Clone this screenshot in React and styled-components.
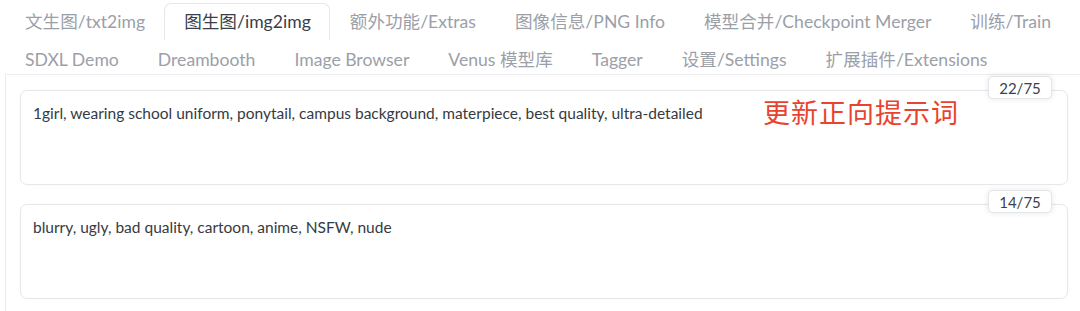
import React from 'react'
import styled, { createGlobalStyle } from 'styled-components'

const GlobalStyle = createGlobalStyle`
  body{
    margin:0;
    background:#fff;
    font-family:Lato, "Noto Sans CJK SC", sans-serif;
  }
`;

const Page = styled.div`
  width:1080px;
  height:311px;
  overflow:hidden;
  background:#fff;
`;

const TabNav = styled.div`
  display:flex;
  flex-direction:column;
  padding:3px 0 0 5px;
`;

const TabRow = styled.div`
  display:flex;
  white-space:nowrap;
`;

const Tab = styled.button`
  box-sizing:border-box;
  flex:none;
  height:${props=>props.row2?'34px':'37px'};
  padding:${props=>props.row2?'4px 18px 0 19px':'0 18px 0 19px'};
  margin:0;
  background:#fff;
  border:1px solid ${props=>props.active?'#e6e7ea':'transparent'};
  border-bottom:none;
  border-radius:7px 7px 0 0;
  font-family:Lato, "Noto Sans CJK SC", sans-serif;
  font-size:17.6px;
  color:${props=>props.active?'#3a3f4a':'#9ba0a8'};
  white-space:nowrap;
  line-height:1;
`;

const Panel = styled.div`
  margin-left:5px;
  border:1px solid #ececee;
  border-right:none;
  border-bottom:none;
  padding:15px 12px 0 14px;
  display:flex;
  flex-direction:column;
  gap:19px;
  height:240px;
  box-sizing:border-box;
`;

const PromptBox = styled.div`
  position:relative;
  box-sizing:border-box;
  height:95px;
  border:1px solid #e6e7ea;
  border-radius:7px;
  padding:13px 12px;
  font-size:15.5px;
  color:#363a42;
  box-shadow:0 0 2px rgba(0,0,0,0.03);
`;

const Counter = styled.span`
  position:absolute;
  top:-15px;
  right:15px;
  width:64px;
  height:23px;
  box-sizing:border-box;
  display:flex;
  align-items:center;
  justify-content:center;
  background:#fff;
  border:1px solid #e4e5e8;
  border-radius:5px;
  box-shadow:0 0 4px 2px rgba(0,0,0,0.05);
  font-size:15px;
  color:#3c414b;
`;

const Note = styled.span`
  position:absolute;
  top:1px;
  left:742px;
  font-family:"Noto Sans CJK SC", sans-serif;
  font-size:27px;
  color:#e8432e;
  letter-spacing:1px;
`;

const row1 = ['文生图/txt2img','图生图/img2img','额外功能/Extras','图像信息/PNG Info','模型合并/Checkpoint Merger','训练/Train'];
const row2 = ['SDXL Demo','Dreambooth','Image Browser','Venus 模型库','Tagger','设置/Settings','扩展插件/Extensions'];

const App = () => {
  return (
    <Page>
      <GlobalStyle/>
      <TabNav>
        <TabRow>
          {row1.map(t=><Tab key={t} active={t==='图生图/img2img'}>{t}</Tab>)}
        </TabRow>
        <TabRow>
          {row2.map(t=><Tab key={t} row2>{t}</Tab>)}
        </TabRow>
      </TabNav>
      <Panel>
        <PromptBox>
          1girl, wearing school uniform, ponytail, campus background, materpiece, best quality, ultra-detailed
          <Counter>22/75</Counter>
          <Note>更新正向提示词</Note>
        </PromptBox>
        <PromptBox>
          blurry, ugly, bad quality, cartoon, anime, NSFW, nude
          <Counter>14/75</Counter>
        </PromptBox>
      </Panel>
    </Page>
  )
}

export default App
